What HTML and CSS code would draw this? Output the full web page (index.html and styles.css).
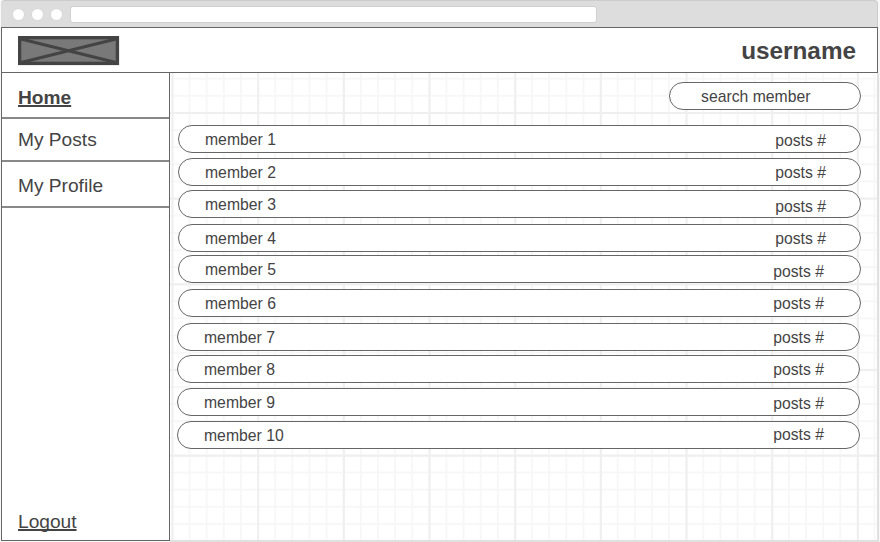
FILE: index.html
```html
<!DOCTYPE html>
<html lang="en">
<head>
<meta charset="utf-8">
<title>Members</title>
<link rel="stylesheet" href="styles.css">
</head>
<body>
<div class="browser">
  <div class="chrome">
    <i class="dot"></i><i class="dot"></i><i class="dot"></i>
    <div class="address"></div>
  </div>
  <header class="header">
    <svg class="logo" width="102" height="30" viewBox="0 0 102 30">
      <rect x="1.6" y="1.6" width="97.8" height="25.8" fill="#797979" stroke="#444" stroke-width="3.4"/>
      <path d="M3 3L98 26.500M3 26.500L98 3" stroke="#444" stroke-width="3.200"/>
    </svg>
    <div class="username">username</div>
  </header>
  <div class="body">
    <nav class="sidebar">
      <a class="item home">Home</a>
      <a class="item posts">My Posts</a>
      <a class="item profile">My Profile</a>
      <a class="logout">Logout</a>
    </nav>
    <main class="main">
      <div class="search">search member</div>
      <ul class="members">
        <li><span>member 1</span><span class="low">posts #</span></li>
        <li class="gap-5"><span>member 2</span><span>posts #</span></li>
        <li class="gap-4"><span>member 3</span><span class="low2">posts #</span></li>
        <li class="gap-6"><span>member 4</span><span>posts #</span></li>
        <li class="gap-3 inset"><span>member 5</span><span class="low2">posts #</span></li>
        <li class="gap-6 inset"><span>member 6</span><span>posts #</span></li>
        <li class="gap-6 shifted"><span>member 7</span><span>posts #</span></li>
        <li class="gap-4 shifted"><span>member 8</span><span>posts #</span></li>
        <li class="gap-5 shifted"><span>member 9</span><span class="low">posts #</span></li>
        <li class="gap-5 shifted"><span>member 10</span><span class="high">posts #</span></li>
      </ul>
    </main>
  </div>
</div>
</body>
</html>
```
FILE: styles.css
```css
* { box-sizing: border-box; }
body {
  margin: 0;
  background: #f8f8f8;
  color: #444;
  font-family: "Liberation Sans", Arial, sans-serif;
}
.browser {
  width: 880px;
  height: 542px;
  padding-left: 1px;
  display: flex;
  flex-direction: column;
  overflow: hidden;
}
.chrome {
  width: 877px;
  height: 27px;
  padding: 1px 0 0 11.5px;
  display: flex;
  align-items: center;
  background: #ddd;
  border-top: 1px solid #ccc;
  border-right: 1px solid #ccc;
  border-radius: 4px 4px 0 0;
}
.dot {
  width: 11px;
  height: 11px;
  margin-right: 8px;
  border-radius: 50%;
  background: #fff;
  box-shadow: 0 0 0 .5px #d2d2d2;
}
.address {
  width: 527px;
  height: 17px;
  margin-left: .5px;
  background: #fff;
  border: 1px solid #d0d0d0;
  border-radius: 3px;
}
.header {
  width: 877px;
  height: 46px;
  padding: 2px 21px 0 16px;
  display: flex;
  align-items: center;
  justify-content: space-between;
  background: #fff;
  border: 1px solid #666;
}
.username { font-size: 24.3px; font-weight: bold; }
.body { display: flex; height: 469px; }
.sidebar {
  width: 169px;
  height: 468px;
  display: flex;
  flex-direction: column;
  background: #fff;
  border: 1px solid #666;
  border-top: 0;
  font-size: 19.15px;
}
.item {
  padding-left: 16px;
  border-bottom: 2px solid #888;
}
.home { height: 46px; line-height: 50px; font-weight: bold; text-decoration: underline 2px; }
.posts { height: 43px; line-height: 41px; }
.profile { height: 46px; line-height: 47px; }
.logout { margin: auto 0 7px 16px; line-height: 22px; text-decoration: underline 2px; text-decoration-skip-ink: none; }
.main {
  width: 709px;
  height: 469px;
  padding: 9px 17px 0 8px;
  border-right: 2px solid #e0e0e0;
  border-bottom: 2px solid #e0e0e0;
  background-color: #fff;
  background-image:
    linear-gradient(90deg, #efefef 2px, transparent 2px),
    linear-gradient(#efefef 2px, transparent 2px),
    linear-gradient(90deg, #f7f7f7 2px, transparent 2px),
    linear-gradient(#f7f7f7 2px, transparent 2px);
  background-size: 85.7px 100%, 100% 85.7px, 17.14px 100%, 100% 17.14px;
  background-position: 1.5px 0, 0 39px, 1.5px 0, 0 4.7px;
}
.search {
  width: 192px;
  height: 28px;
  margin-left: auto;
  padding-left: 31px;
  margin-right: -1px;
  line-height: 27px;
  font-size: 15.75px;
  border: 1px solid #666;
  border-radius: 14px;
  background: #fff;
}
.members { width: 683px; margin: 15px 0 0; padding: 0; list-style: none; }
.members li {
  height: 28px;
  padding: 0 34px 0 26px;
  display: flex;
  justify-content: space-between;
  line-height: 27px;
  font-size: 15.75px;
  background: #fff;
  border: 1px solid #666;
  border-radius: 14px;
}
.members .gap-3 { margin-top: 3px; }
.members .gap-4 { margin-top: 4px; }
.members .gap-5 { margin-top: 5px; }
.members .gap-6 { margin-top: 6px; }
.members .inset { padding-right: 36px; }
.members .shifted { margin-left: -1px; margin-right: 1px; padding-right: 35px; }
.low { padding-top: 1px; }
.low2 { padding-top: 2px; }
.high { margin-top: -1px; }
```
